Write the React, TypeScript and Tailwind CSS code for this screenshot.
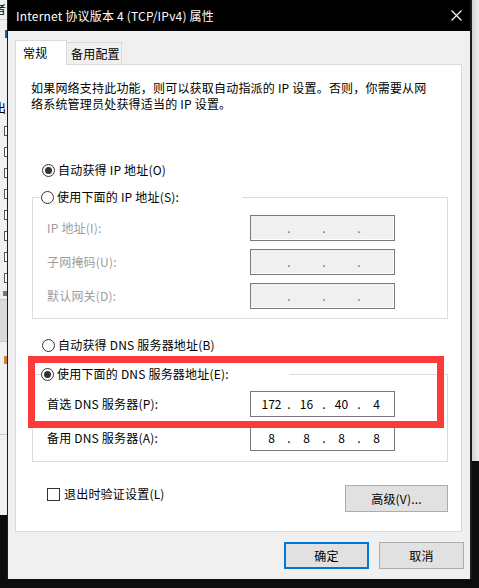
import React from 'react';

const FONT = "font-['Noto_Sans_CJK_SC','Microsoft_YaHei',sans-serif]";

const Radio = ({ checked }: { checked?: boolean }) => (
  <span className="w-[13px] h-[13px] rounded-full border border-[#333] bg-white flex items-center justify-center shrink-0">
    {checked && <span className="w-[7px] h-[7px] rounded-full bg-[#333]" />}
  </span>
);

const IpField = ({ values, disabled }: { values: string[]; disabled?: boolean }) => (
  <div
    className={`w-[145px] h-[26px] border border-[#7a7a7a] flex items-center pl-[5px] text-[12px] leading-[16px] tracking-normal ${
      disabled ? 'bg-[#f0f0f0] shadow-[inset_-1px_-1px_0_#ffffff] text-[#6d6d6d]' : 'bg-white text-black'
    }`}
  >
    {values.map((v, i) => (
      <React.Fragment key={i}>
        <span className="w-[31px] text-center">{v}</span>
        {i < 3 && <span className="w-[4px] text-center">.</span>}
      </React.Fragment>
    ))}
  </div>
);

const FieldRow = ({ label, values, disabled }: { label: string; values: string[]; disabled?: boolean }) => (
  <div className="flex items-center">
    <span className={`w-[217px] pl-[14px] ${disabled ? 'text-[#9d9d9d]' : 'text-black'}`}>{label}</span>
    <IpField values={values} disabled={disabled} />
  </div>
);

// Bits of the window behind the dialog
const BackWindowLeft = () => (
  <div className="w-[7px] flex flex-col shrink-0">
    <div className="h-[515px] bg-[#f0f0f0] overflow-hidden flex flex-col">
      <div className="h-[20px] border-b border-[#cfcfcf] text-[12px] leading-[16px] pt-[1px] -ml-[6px]">者</div>
      <div className="mt-[10px] ml-[5px] w-[2px] h-[8px] bg-[#1f5fa8]" />
      <div className="mt-[62px] text-[12px] leading-[16px] -ml-[6px]">出</div>
      <div className="mt-[10px] flex flex-col gap-[11px] ml-[4px]">
        {Array.from({ length: 8 }).map((_, i) => (
          <div key={i} className="w-[5px] h-[10px] border border-r-0 border-[#555] bg-white" />
        ))}
      </div>
      <div className="mt-[8px] ml-[3px] w-[4px] h-[5px] bg-[#777]" />
      <div className="mt-[3px] h-[43px] bg-[#dadada] border-y border-[#c8c8c8]" />
      <div className="mt-[14px] ml-[4px] w-[3px] h-[8px] bg-[#c9823a]" />
      <div className="mt-[70px] h-px bg-[#c8c8c8]" />
    </div>
    <div className="flex-1 bg-[#0d0d0d]" />
  </div>
);

const BackWindowRight = () => (
  <div className="w-[7px] flex flex-col shrink-0">
    <div className="h-[461px] bg-gradient-to-r from-[#d2d2d2] to-[#eeeeee]" />
    <div className="flex-1 bg-[#0d0d0d]" />
  </div>
);

export default function App() {
  return (
    <div className={`w-[479px] h-[588px] overflow-hidden bg-[#0d0d0d] flex ${FONT} text-[12px] leading-[16px] tracking-[0.2px] text-black`}>
      <BackWindowLeft />

      {/* Dialog */}
      <div className="w-[465px] h-[579px] flex flex-col border-l border-r-2 border-[#1c1c1c] bg-[#f0f0f0] shrink-0">
        {/* Title bar */}
        <div className="h-[31px] bg-black flex items-center justify-between pl-[8px] pr-[8px] text-white">
          <span>Internet 协议版本 4 (TCP/IPv4) 属性</span>
          <svg width="11" height="11" viewBox="0 0 11 11">
            <path d="M0.5 0.5 L10.5 10.5 M10.5 0.5 L0.5 10.5" stroke="#fff" strokeWidth="1.1" />
          </svg>
        </div>

        {/* Tabs */}
        <div className="flex items-end pl-[7px] mt-[9px]">
          <div className="relative z-10 w-[52px] h-[25px] bg-white border-x border-t border-[#d9d9d9] pl-[7px] pt-[4px]">常规</div>
          <div className="w-[55px] h-[23px] border-t border-r border-[#d9d9d9] pl-[4px] pt-[3px]">备用配置</div>
        </div>

        {/* Panel */}
        <div className="relative ml-[7px] -mt-px w-[447px] h-[468px] bg-white border border-[#d9d9d9] flex flex-col">
          <div className="pl-[15px] mt-[15px]">
            <div>如果网络支持此功能，则可以获取自动指派的 IP 设置。否则，你需要从网</div>
            <div>络系统管理员处获得适当的 IP 设置。</div>
          </div>

          <div className="ml-[26px] mt-[50px] flex items-center gap-[3px] h-[16px]">
            <Radio checked />
            <span>自动获得 IP 地址(O)</span>
          </div>

          <fieldset className="ml-[16px] mr-[13px] mt-[11px] border border-[#dcdcdc] pb-[9px]">
            <legend className="ml-[8px] w-[201px] h-[16px]">
              <div className="flex items-center gap-[3px] h-[16px]">
                <Radio />
                <span>使用下面的 IP 地址(S):</span>
              </div>
            </legend>
            <div className="mt-[10px] flex flex-col gap-[8px]">
              <FieldRow label="IP 地址(I):" values={['', '', '', '']} disabled />
              <FieldRow label="子网掩码(U):" values={['', '', '', '']} disabled />
              <FieldRow label="默认网关(D):" values={['', '', '', '']} disabled />
            </div>
          </fieldset>

          <div className="ml-[26px] mt-[18px] flex items-center gap-[3px] h-[16px]">
            <Radio />
            <span>自动获得 DNS 服务器地址(B)</span>
          </div>

          <fieldset className="ml-[16px] mr-[13px] mt-[13px] border border-[#dcdcdc] pb-[10px]">
            <legend className="ml-[8px] w-[248px] h-[16px]">
              <div className="flex items-center gap-[3px] h-[16px]">
                <Radio checked />
                <span>使用下面的 DNS 服务器地址(E):</span>
              </div>
            </legend>
            <div className="mt-[9px] flex flex-col gap-[8px]">
              <FieldRow label="首选 DNS 服务器(P):" values={['172', '16', '40', '4']} />
              <FieldRow label="备用 DNS 服务器(A):" values={['8', '8', '8', '8']} />
            </div>
          </fieldset>

          <div className="mt-[23px] ml-[31px] mr-[13px] flex items-start justify-between">
            <div className="mt-[1px] flex items-center gap-[4px] h-[16px]">
              <span className="w-[13px] h-[13px] border border-[#333] bg-white" />
              <span>退出时验证设置(L)</span>
            </div>
            <button className="w-[103px] h-[27px] bg-[#e1e1e1] border border-[#adadad] flex items-center justify-center">
              高级(V)...
            </button>
          </div>

          {/* Highlight frame */}
          <div className="absolute left-[12px] top-[291px] w-[416px] h-[72px] border-[7px] border-[#fd3a3a]" />
        </div>

        {/* Footer buttons */}
        <div className="mt-[10px] pr-[6px] flex justify-end gap-[10px]">
          <button className="w-[85px] h-[27px] bg-[#e1e1e1] border-2 border-[#0078d7] flex items-center justify-center">确定</button>
          <button className="w-[85px] h-[27px] bg-[#e1e1e1] border border-[#adadad] flex items-center justify-center">取消</button>
        </div>
      </div>

      <BackWindowRight />
    </div>
  );
}
